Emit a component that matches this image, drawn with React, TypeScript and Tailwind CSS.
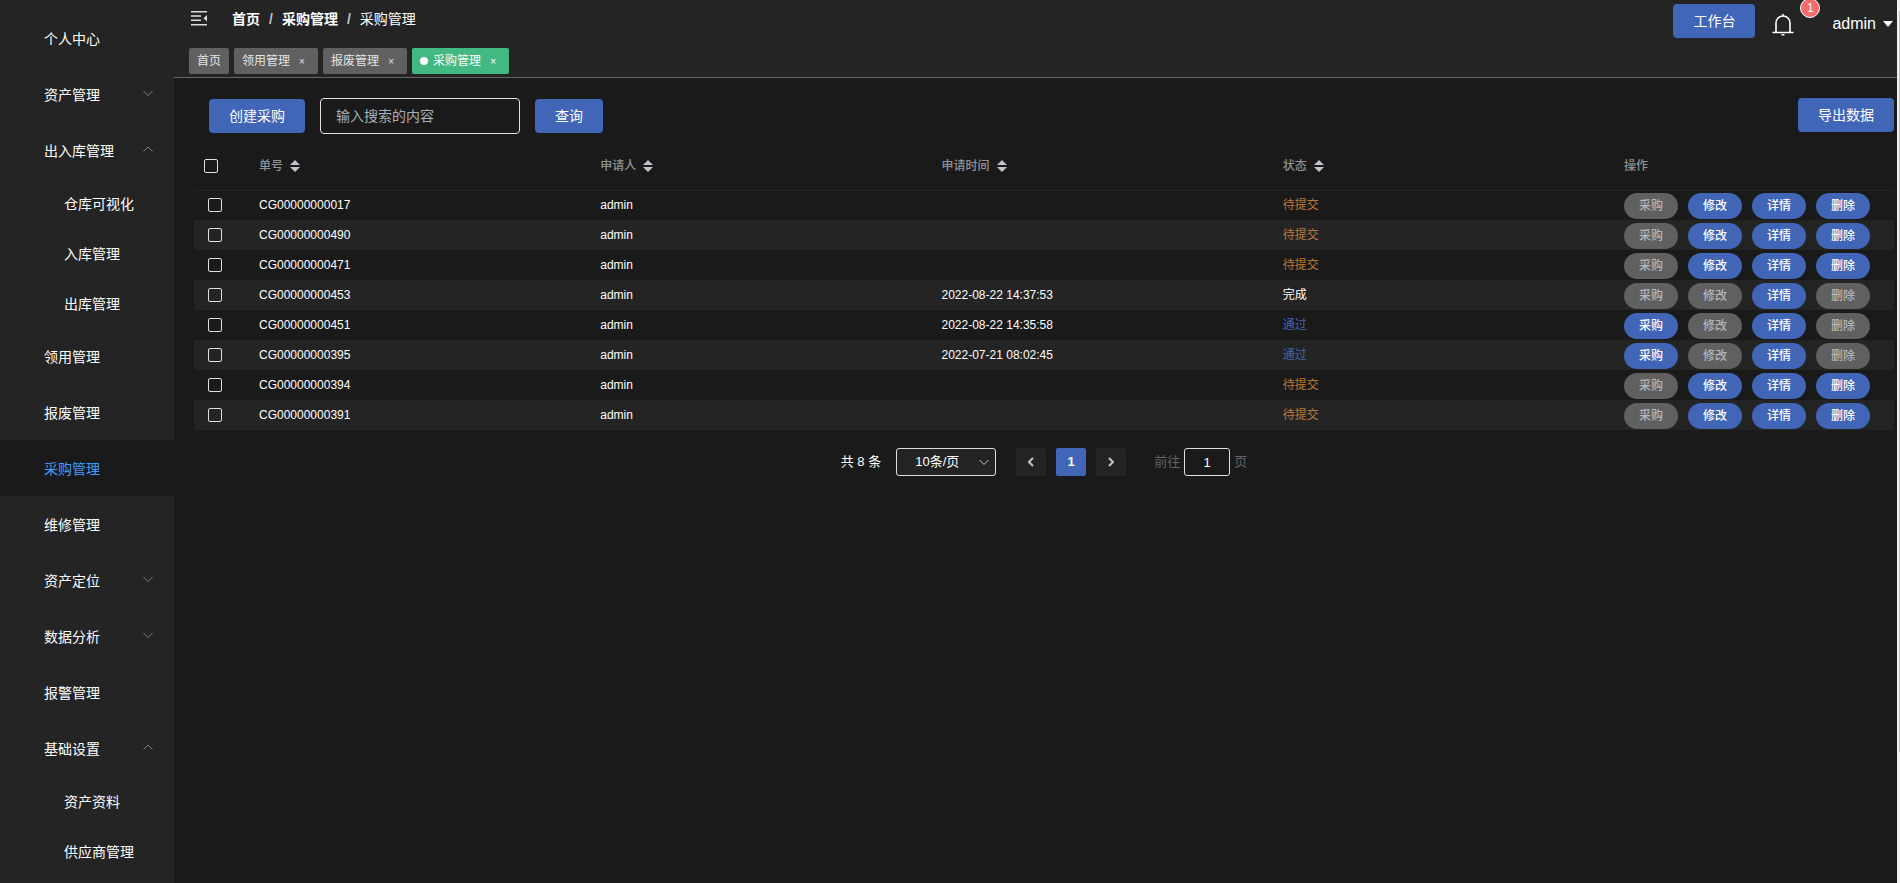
import React, { useState } from 'react';

type NavItem = {
  label: string;
  arrow?: 'up' | 'down';
  children?: string[];
};

const navItems: NavItem[] = [
  { label: '个人中心' },
  { label: '资产管理', arrow: 'down' },
  { label: '出入库管理', arrow: 'up', children: ['仓库可视化', '入库管理', '出库管理'] },
  { label: '领用管理' },
  { label: '报废管理' },
  { label: '采购管理' },
  { label: '维修管理' },
  { label: '资产定位', arrow: 'down' },
  { label: '数据分析', arrow: 'down' },
  { label: '报警管理' },
  { label: '基础设置', arrow: 'up', children: ['资产资料', '供应商管理'] },
];

const tabs = [
  { label: '首页', closable: false },
  { label: '领用管理', closable: true },
  { label: '报废管理', closable: true },
  { label: '采购管理', closable: true },
];

const columns = ['单号', '申请人', '申请时间', '状态'];

type Status = '待提交' | '完成' | '通过';

const statusColor: Record<Status, string> = {
  待提交: 'text-[#b9793b]',
  完成: 'text-white',
  通过: 'text-[#4165b7]',
};

// Which row actions are available in each state
const enabledActions: Record<Status, string[]> = {
  待提交: ['修改', '详情', '删除'],
  完成: ['详情'],
  通过: ['采购', '详情'],
};

const actions = ['采购', '修改', '详情', '删除'];

const rows: { id: string; user: string; time: string; status: Status }[] = [
  { id: 'CG00000000017', user: 'admin', time: '', status: '待提交' },
  { id: 'CG00000000490', user: 'admin', time: '', status: '待提交' },
  { id: 'CG00000000471', user: 'admin', time: '', status: '待提交' },
  { id: 'CG00000000453', user: 'admin', time: '2022-08-22 14:37:53', status: '完成' },
  { id: 'CG00000000451', user: 'admin', time: '2022-08-22 14:35:58', status: '通过' },
  { id: 'CG00000000395', user: 'admin', time: '2022-07-21 08:02:45', status: '通过' },
  { id: 'CG00000000394', user: 'admin', time: '', status: '待提交' },
  { id: 'CG00000000391', user: 'admin', time: '', status: '待提交' },
];

const Chevron: React.FC<{ dir: 'up' | 'down' | 'left' | 'right'; className?: string; width?: number }> = ({
  dir,
  className = '',
  width = 1,
}) => {
  const paths = {
    up: 'M1.5 8.5 6 4l4.5 4.5',
    down: 'M1.5 4 6 8.5 10.5 4',
    left: 'M8 2 4 6l4 4',
    right: 'M4 2l4 4-4 4',
  };
  return (
    <svg viewBox="0 0 12 12" className={`size-3 ${className}`} fill="none" stroke="currentColor" strokeWidth={width}>
      <path d={paths[dir]} />
    </svg>
  );
};

const Checkbox: React.FC<{ label: string }> = ({ label }) => (
  <input
    type="checkbox"
    aria-label={label}
    className="block size-3.5 appearance-none rounded-xs border border-[#dcdfe6] checked:bg-[#4165b7]"
  />
);

const Sidebar: React.FC = () => (
  <nav className="w-[174px] shrink-0 bg-[#242424] pt-2.5">
    <ul>
      {navItems.map((item) => (
        <li key={item.label}>
          <a
            href="#"
            className={`flex h-14 items-center justify-between pl-11 pr-5 pt-0.5 ${
              item.label === '采购管理' ? 'bg-[#1a1a1a] text-[#409eff]' : 'text-white'
            }`}
          >
            {item.label}
            {item.arrow && <Chevron dir={item.arrow} className="mb-1 text-[#7d8087]" />}
          </a>
          {item.children && (
            <ul>
              {item.children.map((child) => (
                <li key={child}>
                  <a href="#" className="flex h-[50px] items-center pl-16 pt-0.5">
                    {child}
                  </a>
                </li>
              ))}
            </ul>
          )}
        </li>
      ))}
    </ul>
  </nav>
);

const Header: React.FC = () => (
  <header className="border-b border-[#666] bg-[#242424]">
    <div className="flex h-11 items-start justify-between border-b border-[#212121]">
      <div className="flex h-[38px] items-center">
        <button type="button" aria-label="收起菜单" className="ml-4 mr-6">
          <svg viewBox="0 0 18 16" className="h-4 w-[18px]" fill="#dcdcdc">
            <path d="M1 0h16v1.4H1zM1 4.300h10v1.400H1zM1 8.600h10v1.400H1zM1 13h16v1.400H1zM17 4v6.400L13.500 7.200z" />
          </svg>
        </button>
        <nav className="flex gap-[9px]">
          <a href="#" className="font-bold">首页</a>
          <span className="font-bold text-[#c0c4cc]">/</span>
          <a href="#" className="font-bold">采购管理</a>
          <span className="font-bold text-[#c0c4cc]">/</span>
          <span>采购管理</span>
        </nav>
      </div>
      <div className="flex items-start pr-1 pt-1">
        <button type="button" className="h-[34px] rounded bg-[#4165b7] px-5">工作台</button>
        <button type="button" aria-label="通知" className="relative ml-4 mt-2">
          <svg viewBox="0 0 24 24" className="size-6" fill="none" stroke="white" strokeWidth="1.6">
            <path d="M1.500 20.500h21M5 20.500V11a7 7 0 0 1 14 0v9.500" />
            <path d="M12 2v2M10.500 22.800h3" />
          </svg>
          <span className="absolute -right-[25px] -top-3.5 flex h-5 w-5 items-center justify-center rounded-full border border-white bg-[#f56c6c] text-xs">
            1
          </span>
        </button>
        <button type="button" className="ml-[37px] flex h-10 items-center gap-[7px] text-base">
          admin
          <svg viewBox="0 0 10 6" className="h-1.5 w-2.5" fill="white">
            <path d="M0 0h10L5 6z" />
          </svg>
        </button>
      </div>
    </div>
    <div className="flex h-[33px] items-center gap-[5px] pl-[15px] text-xs">
      {tabs.map((tab) => {
        const active = tab.label === '采购管理';
        return (
          <a
            key={tab.label}
            href="#"
            className={`flex h-[26px] items-center rounded-xs px-2 ${
              active ? 'bg-[#42b983] text-white' : 'bg-[#606060] text-[#e4e4e4]'
            }`}
          >
            {active && <span className="mr-[5px] size-2 rounded-full bg-white" />}
            {tab.label}
            {tab.closable && <span className="ml-1 w-4 pt-0.5 text-center text-[10px]">×</span>}
          </a>
        );
      })}
    </div>
  </header>
);

const SortIcon: React.FC = () => (
  <svg viewBox="0 0 10 12" className="h-3 w-2.5" fill="#c0c4cc">
    <path d="M0 5h10L5 0zM0 7h10L5 12z" />
  </svg>
);

const PurchaseTable: React.FC = () => (
  <table className="w-full table-fixed text-xs">
    <colgroup>
      <col className="w-[55px]" />
      <col span={4} />
      <col className="w-[280px]" />
    </colgroup>
    <thead>
      <tr className="h-12 border-b border-[#242424] text-left text-[#909399]">
        <th className="pl-2.5">
          <Checkbox label="全选" />
        </th>
        {columns.map((column) => (
          <th key={column} className="pl-2.5 font-medium">
            <button type="button" className="flex items-center gap-[7px]">
              {column}
              <SortIcon />
            </button>
          </th>
        ))}
        <th className="pl-2.5 font-medium">操作</th>
      </tr>
    </thead>
    <tbody>
      {rows.map((row) => (
        <tr key={row.id} className="h-[30px] even:bg-[#242424]">
          <td className="pl-3.5">
            <Checkbox label={row.id} />
          </td>
          <td className="pl-2.5">{row.id}</td>
          <td className="pl-2.5">{row.user}</td>
          <td className="pl-2.5">{row.time}</td>
          <td className={`pl-2.5 ${statusColor[row.status]}`}>{row.status}</td>
          <td className="pl-2.5">
            <div className="flex gap-2.5 pt-0.5">
              {actions.map((action) => (
                <button
                  key={action}
                  type="button"
                  disabled={!enabledActions[row.status].includes(action)}
                  className="h-[26px] w-[54px] rounded-full bg-[#4165b7] font-medium disabled:bg-[#606060] disabled:text-[#b5b7bb]"
                >
                  {action}
                </button>
              ))}
            </div>
          </td>
        </tr>
      ))}
    </tbody>
  </table>
);

const Pagination: React.FC = () => {
  const [page, setPage] = useState('1');

  return (
    <div className="flex items-center justify-center text-[13px]">
      <span>共 8 条</span>
      <div className="relative ml-[15px]">
        <select
          aria-label="每页条数"
          className="h-7 w-[100px] appearance-none rounded-[3px] border border-[#dcdfe6] bg-[#242424] pl-[18px]"
        >
          <option>10条/页</option>
        </select>
        <Chevron dir="down" className="pointer-events-none absolute right-1.5 top-2 text-[#c0c4cc]" />
      </div>
      <div className="ml-5 flex gap-2.5">
        <button type="button" aria-label="上一页" className="flex h-7 w-[30px] items-center justify-center rounded-xs bg-[#242424] text-[#c0c4cc]">
          <Chevron dir="left" width={2} />
        </button>
        <button type="button" className="h-7 w-[30px] rounded-xs bg-[#4165b7] font-bold">1</button>
        <button type="button" aria-label="下一页" className="flex h-7 w-[30px] items-center justify-center rounded-xs bg-[#242424] text-[#c0c4cc]">
          <Chevron dir="right" width={2} />
        </button>
      </div>
      <label className="ml-7 flex items-center gap-1 text-[#606266]">
        前往
        <input
          value={page}
          onChange={(e) => setPage(e.target.value)}
          className="h-7 w-[46px] rounded-[3px] border border-[#dcdfe6] text-center text-white"
        />
        页
      </label>
    </div>
  );
};

const App: React.FC = () => {
  return (
    <div className="flex h-screen overflow-hidden bg-[#1a1a1a] font-['Liberation_Sans','Noto_Sans_CJK_SC',sans-serif] text-sm text-white">
      <Sidebar />
      <div className="flex min-w-0 flex-1 flex-col">
        <Header />
        <main className="flex-1 pl-5 pr-[3px] pt-5">
          <div className="flex items-center pl-[15px]">
            <button type="button" className="h-[34px] rounded bg-[#4165b7] px-5">创建采购</button>
            <input
              aria-label="搜索"
              placeholder="输入搜索的内容"
              className="ml-[15px] h-9 w-[200px] rounded border border-[#dcdfe6] px-[15px] placeholder:text-[#a9adb5]"
            />
            <button type="button" className="ml-[15px] h-[34px] rounded bg-[#4165b7] px-5">查询</button>
            <button type="button" className="ml-auto h-[34px] self-start rounded bg-[#4165b7] px-5">导出数据</button>
          </div>
          <div className="pt-2 pb-[18px]">
            <PurchaseTable />
          </div>
          <Pagination />
        </main>
      </div>
      {/* Scroll track */}
      <div className="w-[3px] shrink-0 bg-[#f1f1f1] pl-0.5 pt-[11px]">
        <div className="h-[85%] bg-[#c1c1c1]" />
      </div>
    </div>
  );
};

export default App;
